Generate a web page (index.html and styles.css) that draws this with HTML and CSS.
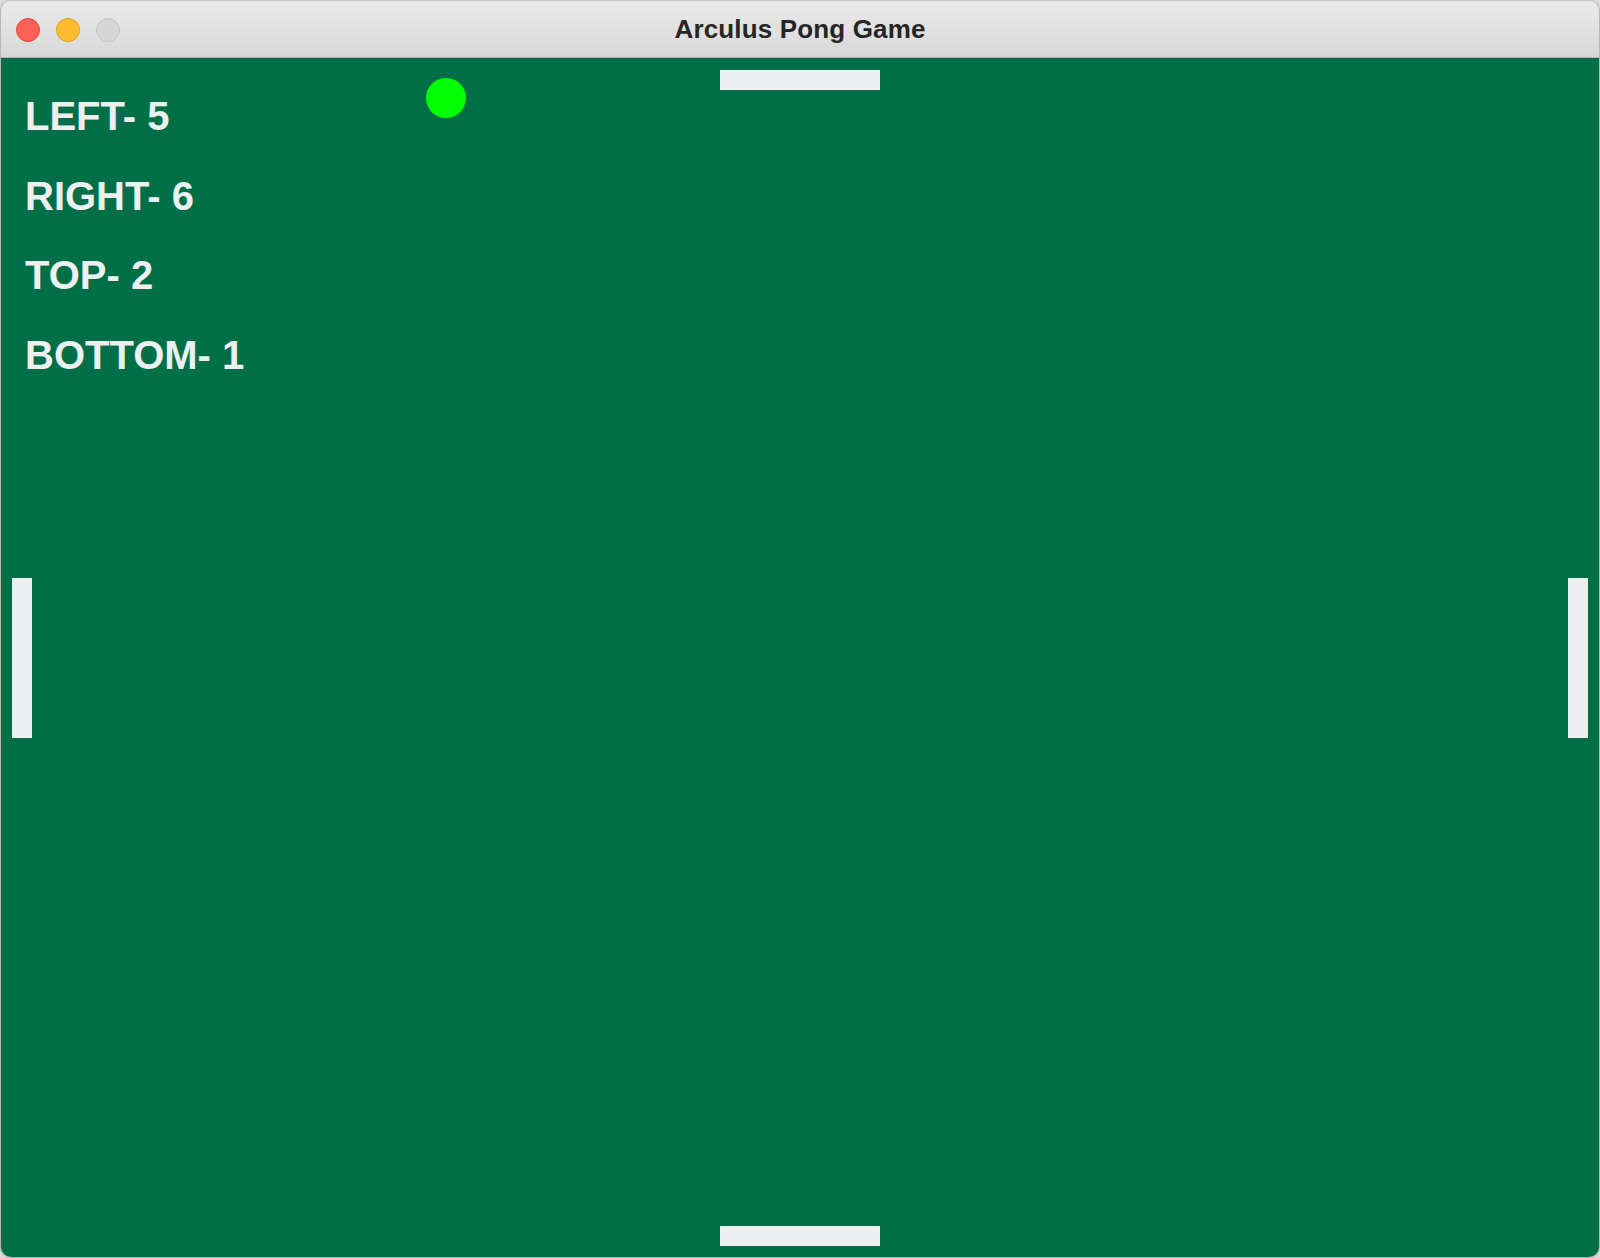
FILE: index.html
```html
<!DOCTYPE html>
<html lang="en">
<head>
<meta charset="utf-8">
<title>Arculus Pong Game</title>
<link rel="stylesheet" href="styles.css">
</head>
<body>
<div class="window">
  <header class="titlebar">
    <div class="lights">
      <span class="light red"></span>
      <span class="light yellow"></span>
      <span class="light gray"></span>
    </div>
    <h1 class="title">Arculus Pong Game</h1>
  </header>
  <main class="court">
    <div class="scores">
      <div class="score">LEFT- 5</div>
      <div class="score">RIGHT- 6</div>
      <div class="score">TOP- 2</div>
      <div class="score">BOTTOM- 1</div>
    </div>
    <div class="paddle paddle-top"></div>
    <div class="paddle paddle-bottom"></div>
    <div class="paddle paddle-left"></div>
    <div class="paddle paddle-right"></div>
    <div class="ball"></div>
  </main>
</div>
</body>
</html>
```
FILE: styles.css
```css
html, body {
  margin: 0;
  padding: 0;
  width: 1600px;
  height: 1258px;
  overflow: hidden;
  background: #d9d9d9;
}

.window {
  width: 1600px;
  height: 1258px;
  border-radius: 11px;
  overflow: hidden;
  display: flex;
  flex-direction: column;
  box-sizing: border-box;
  border: 1px solid #b8b8b8;
  border-top-color: #c8c8c8;
}

.titlebar {
  position: relative;
  height: 56px;
  flex: none;
  background: linear-gradient(#ebebeb, #d7d7d7);
  border-bottom: 1px solid #b4b4b4;
  display: flex;
  align-items: center;
  justify-content: center;
}

.lights {
  position: absolute;
  left: 15px;
  top: 17px;
  display: flex;
  gap: 16px;
}

.light {
  width: 22px;
  height: 22px;
  border-radius: 50%;
  border: 1px solid;
}

.red { background: #ff5f57; border-color: #e0443e; }
.yellow { background: #febc2e; border-color: #dea123; }
.gray { background: #d6d6d6; border-color: #c2c2c2; }

.title {
  margin: 0;
  padding-top: 1px;
  font-family: "Liberation Sans", Arial, sans-serif;
  font-weight: 700;
  font-size: 26px;
  color: #262626;
  letter-spacing: 0.15px;
}

.court {
  position: relative;
  flex: 1;
  background: #006e46;
  padding: 19px 0 0 24px;
}

.scores {
  display: flex;
  flex-direction: column;
}

.score {
  font-family: "Liberation Sans", Arial, sans-serif;
  font-weight: 700;
  font-size: 40px;
  line-height: 79.5px;
  color: #ecf0f1;
  letter-spacing: 0;
}

.paddle {
  position: absolute;
  background: #ecf0f1;
}

.paddle-top {
  left: 719px;
  top: 12px;
  width: 160px;
  height: 20px;
}

.paddle-bottom {
  left: 719px;
  top: 1168px;
  width: 160px;
  height: 20px;
}

.paddle-left {
  left: 11px;
  top: 520px;
  width: 20px;
  height: 160px;
}

.paddle-right {
  left: 1567px;
  top: 520px;
  width: 20px;
  height: 160px;
}

.ball {
  position: absolute;
  left: 425px;
  top: 20px;
  width: 40px;
  height: 40px;
  border-radius: 50%;
  background: #00ff00;
}
```
